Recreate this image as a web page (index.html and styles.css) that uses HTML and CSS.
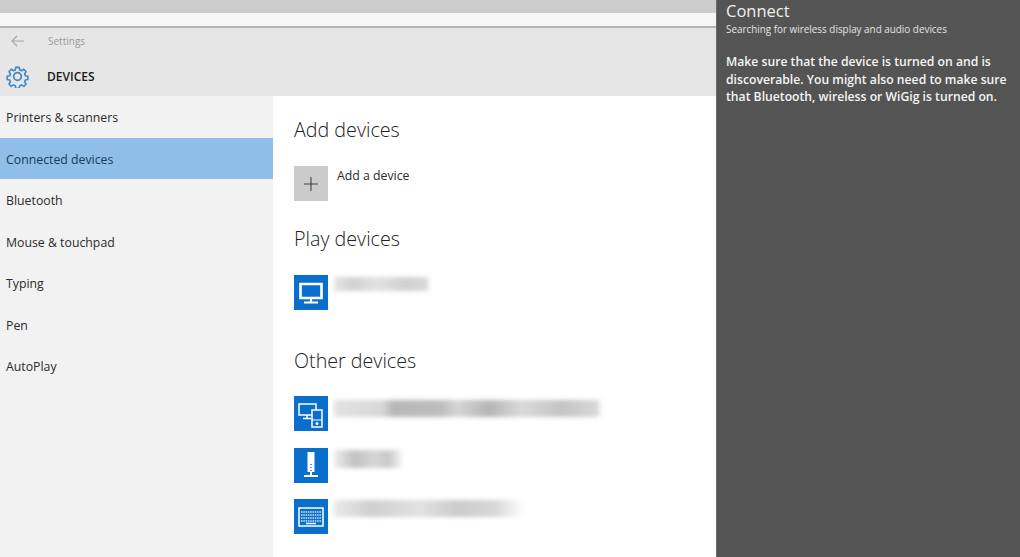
FILE: index.html
```html
<!DOCTYPE html>
<html lang="en">
<head>
<meta charset="utf-8">
<title>Settings - Devices</title>
<link rel="stylesheet" href="styles.css">
</head>
<body>
<div class="desktop">
  <div class="window-area">
    <div class="topbar"></div>
    <div class="strip"></div>
    <header class="header">
      <div class="titlebar">
        <svg class="back" width="14" height="12" viewBox="0 0 14 12"><path d="M6 1 1 6l5 5M1 6h12" fill="none" stroke="#a9a9a9" stroke-width="1.2"/></svg>
        <span class="app-name">Settings</span>
      </div>
      <div class="pagehead">
        <svg class="gear" width="23" height="23" viewBox="0 0 24 24"><path d="M10 1.5h4l.6 3 2 .9 2.6-1.7 2.6 2.8-1.7 2.5.8 2 3 .6v3.8l-3 .6-.8 2 1.7 2.5-2.6 2.8-2.6-1.7-2 .9-.6 3h-4l-.6-3-2-.9-2.6 1.7-2.6-2.8 1.7-2.5-.8-2-3-.6v-3.8l3-.6.8-2-1.7-2.5 2.6-2.8 2.6 1.7 2-.9z" transform="translate(1.1 1.1) scale(.91)" fill="none" stroke="#3f88c5" stroke-width="1.8" stroke-linejoin="round"/><circle cx="12" cy="12" r="4" fill="none" stroke="#3f88c5" stroke-width="1.8"/></svg>
        <span class="page-title">DEVICES</span>
      </div>
    </header>
    <div class="content">
      <nav class="sidebar">
        <div class="nav-item">Printers &amp; scanners</div>
        <div class="nav-item selected">Connected devices</div>
        <div class="nav-item">Bluetooth</div>
        <div class="nav-item">Mouse &amp; touchpad</div>
        <div class="nav-item">Typing</div>
        <div class="nav-item">Pen</div>
        <div class="nav-item">AutoPlay</div>
      </nav>
      <main class="main">
        <h2 class="heading first">Add devices</h2>
        <div class="row add-row">
          <div class="tile grey">
            <svg width="14" height="14" viewBox="0 0 14 14"><path d="M7 0v14M0 7h14" stroke="#444" stroke-width="1.1"/></svg>
          </div>
          <span class="add-label">Add a device</span>
        </div>
        <h2 class="heading play">Play devices</h2>
        <div class="row play-row">
          <div class="tile blue">
            <svg width="26" height="24" viewBox="0 0 26 24"><path d="M2.500 3h21v14h-21z" fill="none" stroke="#fff" stroke-width="2.600"/><path d="M13 17v4M6 21.500h14" stroke="#fff" stroke-width="2.200"/></svg>
          </div>
          <div class="blur b-play"></div>
        </div>
        <h2 class="heading other">Other devices</h2>
        <div class="row dev-row">
          <div class="tile blue">
            <svg width="28" height="28" viewBox="0 0 28 28"><path d="M2 4h17v11H2zM10 15v3M6 18.500h8" fill="none" stroke="#fff" stroke-width="1.500"/><rect x="15" y="10" width="10" height="17" fill="#0a6fcc" stroke="#fff" stroke-width="1.500"/><circle cx="20" cy="23.500" r="1.500" fill="#fff"/><path d="M15 20h10" stroke="#fff"/></svg>
          </div>
          <div class="blur b-one"></div>
        </div>
        <div class="row dev-row">
          <div class="tile blue">
            <svg width="24" height="28" viewBox="0 0 24 28"><path d="M8.500 1h7v20h-7z" fill="#fff"/><path d="M12 13v1M12 16v1M12 19v1" stroke="#0a6fcc" stroke-width="1.400"/><path d="M12 21v3M5 25h14" stroke="#fff" stroke-width="2"/></svg>
          </div>
          <div class="blur b-two"></div>
        </div>
        <div class="row dev-row">
          <div class="tile blue">
            <svg width="26" height="20" viewBox="0 0 26 20"><rect x="1" y="1" width="24" height="18" fill="none" stroke="#fff" stroke-width="1.500"/><path d="M3 5h20M3 8h20M3 11h20M3 14h20" stroke="#cfe3f7" stroke-width="1.500" stroke-dasharray="1.500 .8"/><path d="M8 16.500h10" stroke="#fff" stroke-width="1.500"/></svg>
          </div>
          <div class="blur b-three"></div>
        </div>
      </main>
    </div>
  </div>
  <aside class="panel">
    <div class="panel-title">Connect</div>
    <div class="panel-sub">Searching for wireless display and audio devices</div>
    <p class="panel-text">Make sure that the device is turned on and is discoverable. You might also need to make sure that Bluetooth, wireless or WiGig is turned on.</p>
  </aside>
</div>
</body>
</html>
```
FILE: styles.css
```css
* { box-sizing: border-box; }
html, body { margin: 0; height: 100%; overflow: hidden; }
body { font-family: "Open Sans", "Noto Sans", "Liberation Sans", sans-serif; color: #222; background: #fff; }
.desktop { display: flex; width: 1020px; height: 557px; }
.window-area { flex: 0 0 716px; display: flex; flex-direction: column; height: 557px; overflow: hidden; }
.topbar { height: 13px; background: #cdcdcd; }
.strip { height: 15px; background: #f6f6f6; border-bottom: 2px solid #b4b4b4; }
.header { height: 68px; background: #e6e6e6; display: flex; flex-direction: column; }
.titlebar { display: flex; align-items: center; height: 26px; padding-left: 11px; }
.back { flex: none; }
.app-name { margin-left: 23px; font-size: 10px; color: #9a9a9a; }
.pagehead { display: flex; align-items: center; height: 42px; padding: 2px 0 0 6px; }
.gear { flex: none; }
.page-title { margin-left: 18px; font-size: 12px; font-weight: 600; color: #1a1a1a; }
.content { flex: 1; display: flex; min-height: 0; }
.sidebar { flex: 0 0 273px; background: #f2f2f2; }
.nav-item { height: 41.5px; display: flex; align-items: center; padding: 2px 0 0 6px; font-size: 12.300px; color: #2b2b2b; }
.selected { background: #8fbfe8; color: #173a5c; }
.main { flex: 1; background: #fff; padding-left: 21px; }
.heading { margin: 0; font-weight: 300; font-size: 19.700px; line-height: 26px; color: #222; }
.first { margin-top: 21px; }
.row { display: flex; align-items: flex-start; }
.tile { flex: none; width: 34px; height: 35px; display: flex; align-items: center; justify-content: center; }
.grey { background: #cbcbcb; }
.blue { background: #0a6fcc; }
.add-row { margin-top: 23px; }
.add-label { margin-left: 9px; padding-top: 1px; font-size: 12.300px; line-height: 18px; color: #2b2b2b; }
.play { margin-top: 25px; }
.play-row { margin-top: 23px; }
.other { margin-top: 38px; }
.dev-row { margin-top: 16.500px; }
.other + .dev-row { margin-top: 22px; }
.blur { margin-left: 6px; filter: blur(2px); }
.b-play { width: 96px; height: 14px; margin-top: 2px; background: linear-gradient(90deg, #e6e6e6, #d2d2d2 20%, #e2e2e2 45%, #d0d0d0 75%, #d8d8d8 96%, #fff); }
.b-one { width: 268px; height: 17px; margin-top: 4px; background: linear-gradient(90deg, #e2e2e2, #d8d8d8 18%, #b8b8b8 22%, #bdbdbd 40%, #d6d6d6 46%, #b5b5b5 58%, #dadada 70%, #c4c4c4 85%, #d8d8d8 98%, #fff); }
.b-two { width: 68px; height: 18px; margin-top: 2px; background: linear-gradient(90deg, #eee, #c2c2c2 30%, #d6d6d6 60%, #c8c8c8 80%, #f6f6f6); }
.b-three { width: 190px; height: 17px; margin-top: 1px; background: linear-gradient(90deg, #eaeaea, #cfcfcf 20%, #e2e2e2 45%, #cbcbcb 65%, #d8d8d8 85%, #fff); }
.panel { flex: 0 0 304px; height: 557px; background: #545454; border-left: 1px solid #6a6a6a; padding: 0 10px 0 9px; color: #fff; }
.panel-title { font-size: 16.500px; line-height: 21px; color: #f0f0f0; }
.panel-sub { font-size: 9.900px; line-height: 14px; margin-top: 1px; color: #e4e4e4; white-space: nowrap; }
.panel-text { margin: 17px 0 0; font-size: 12.200px; line-height: 17.500px; font-weight: 600; color: #f5f5f5; }
```
